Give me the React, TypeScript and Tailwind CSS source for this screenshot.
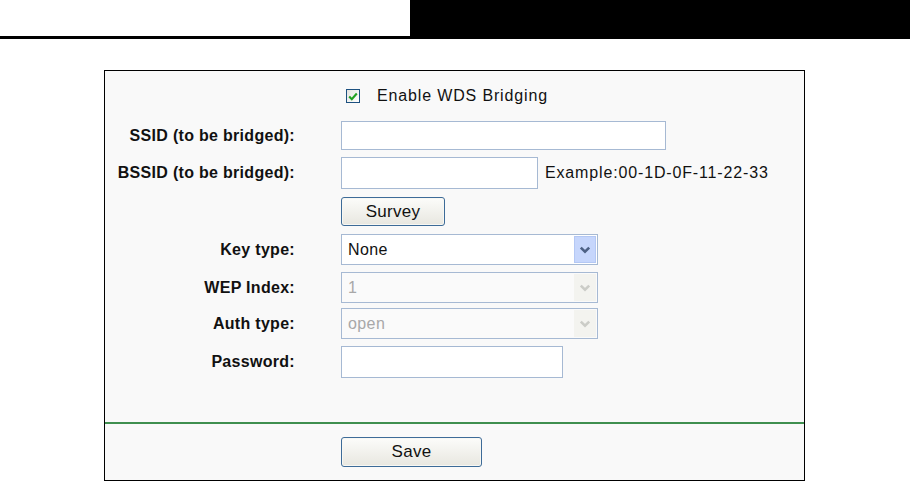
import { ReactNode } from "react";

const font = { fontFamily: '"Liberation Sans", Arial, sans-serif' };

const Label = ({ children }: { children: ReactNode }) => (
  <div className="w-[190px] text-right text-[16px] font-bold tracking-[0.3px] text-[#111]">
    {children}
  </div>
);

const Chevron = ({ color }: { color: string }) => (
  <svg width="12" height="8" viewBox="0 0 12 8">
    <path d="M1.8 1.6 L6 5.6 L10.2 1.6" fill="none" stroke={color} strokeWidth="2.6" />
  </svg>
);

const Select = ({ value, disabled }: { value: string; disabled?: boolean }) => (
  <div
    className={
      "flex h-[31px] w-[257px] items-stretch border border-[#a6b9d3] p-[1px] " +
      (disabled ? "bg-[#fafafa] text-[#a8a8a8]" : "bg-white text-[#111]")
    }
  >
    <div className="flex flex-1 items-center pl-[5px] text-[16px] tracking-[0.4px]">{value}</div>
    <div
      className={
        "flex w-[22px] items-center justify-center " +
        (disabled ? "bg-[#f3f3ef]" : "border border-[#b4c8f4] bg-[#c6d6fc]")
      }
    >
      <Chevron color={disabled ? "#cbccc7" : "#4d6185"} />
    </div>
  </div>
);

const Button = ({ children, cls }: { children: ReactNode; cls: string }) => (
  <button
    className={
      "rounded-[3px] border border-[#3d6b98] bg-gradient-to-b from-[#fcfcfa] to-[#e8e7e0] text-[17px] tracking-[0.3px] text-[#111] shadow-[inset_0_0_0_1px_#f7f7f3] " +
      cls
    }
  >
    {children}
  </button>
);

export default function App() {
  return (
    <div className="h-[481px] w-[910px] overflow-hidden bg-white" style={font}>
      <div className="flex h-[39px]">
        <div className="w-[410px] border-b-[3px] border-black" />
        <div className="flex-1 bg-black" />
      </div>

      <div className="ml-[104px] mt-[31px] flex h-[411px] w-[701px] flex-col border border-black bg-[#f9f9f9]">
        <div className="flex h-[351px] flex-col pt-[13px]">
          <div className="flex h-[24px] items-center">
            <div className="w-[241px]" />
            <div className="flex h-[14px] w-[14px] items-center justify-center border border-[#1d5180] bg-gradient-to-br from-[#e4e4e0] to-white">
              <svg width="10" height="9" viewBox="0 0 10 9">
                <path d="M1.2 4.5 L3.8 7.2 L8.8 1.5" fill="none" stroke="#21a121" strokeWidth="2.1" />
              </svg>
            </div>
            <span className="ml-[17px] text-[16px] tracking-[0.85px] text-[#111]">Enable WDS Bridging</span>
          </div>

          <div className="mt-[13px] flex h-[29px] items-center gap-[46px]">
            <Label>SSID (to be bridged):</Label>
            <div className="h-[29px] w-[325px] border border-[#a6b9d3] bg-white" />
          </div>

          <div className="mt-[7px] flex h-[32px] items-center gap-[46px]">
            <Label>BSSID (to be bridged):</Label>
            <div className="h-[32px] w-[197px] border border-[#a6b9d3] bg-white" />
            <span className="-ml-[39px] text-[16px] tracking-[0.85px] text-[#111]">Example:00-1D-0F-11-22-33</span>
          </div>

          <div className="mt-[8px] flex h-[29px] items-center">
            <div className="w-[236px]" />
            <Button cls="h-[29px] w-[104px]">Survey</Button>
          </div>

          <div className="mt-[8px] flex h-[31px] items-center gap-[46px]">
            <Label>Key type:</Label>
            <Select value="None" />
          </div>

          <div className="mt-[7px] flex h-[31px] items-center gap-[46px]">
            <Label>WEP Index:</Label>
            <Select value="1" disabled />
          </div>

          <div className="mt-[5px] flex h-[31px] items-center gap-[46px]">
            <Label>Auth type:</Label>
            <Select value="open" disabled />
          </div>

          <div className="mt-[7px] flex h-[32px] items-center gap-[46px]">
            <Label>Password:</Label>
            <div className="h-[32px] w-[222px] border border-[#a6b9d3] bg-white" />
          </div>
        </div>

        <div className="h-[2px] bg-[#3f8f4f]" />

        <div className="flex flex-1 items-start pt-[13px]">
          <div className="w-[236px]" />
          <Button cls="h-[30px] w-[141px]">Save</Button>
        </div>
      </div>
    </div>
  );
}
